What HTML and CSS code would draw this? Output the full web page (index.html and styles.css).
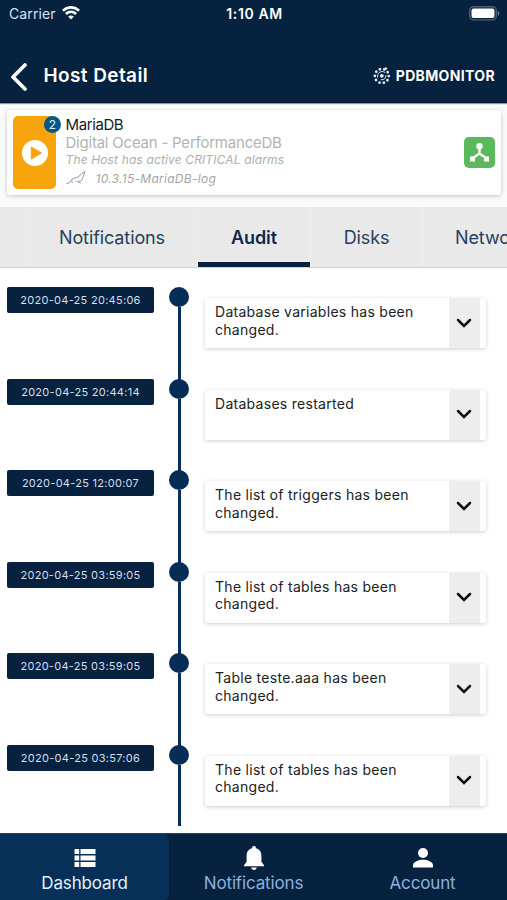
FILE: index.html
```
<!DOCTYPE html>
<html lang="en">
<head>
<meta charset="utf-8">
<title>Host Detail</title>
<link rel="stylesheet" href="styles.css">
</head>
<body>
<div class="screen">
  <header class="header">
    <div class="status">
      <div class="carrier"><span>Carrier</span>
        <svg width="18" height="14" viewBox="0 0 18 14" fill="none" stroke="#fff" stroke-width="2.7"><path d="M.9 4.700C5.600.2 12.400.2 17.100 4.700M3.900 8c3-2.800 7.200-2.800 10.200 0"/><path d="M9 13.500 6.100 10.600c1.800-1.500 4-1.500 5.800 0z" fill="#fff" stroke="none"/></svg>
      </div>
      <div class="clock">1:10 AM</div>
      <svg class="battery" width="31" height="15" viewBox="0 0 31 15"><rect x=".7" y=".7" width="26.600" height="13.200" rx="3.800" fill="none" stroke="#4b5e77" stroke-width="1.400"/><rect x="2.500" y="2.500" width="23" height="9.600" rx="2" fill="#fff"/><path d="M28.800 5c2 .7 2 4 0 4.700z" fill="#71839a"/></svg>
    </div>
    <div class="titlebar">
      <svg class="back" width="18" height="28" viewBox="0 0 18 28" fill="none" stroke="#fff" stroke-width="3.700" stroke-linecap="round" stroke-linejoin="round"><path d="M15 2 3 14l12 12"/></svg>
      <h1>Host Detail</h1>
      <div class="brand">
        <svg width="18" height="18" viewBox="0 0 18 18" fill="none" stroke="#e6f1ff"><circle cx="8.800" cy="9" r="7" stroke-width="2.700" stroke-linecap="round" stroke-dasharray=".1 4.300"/><path d="M4.600 10.500C3.700 6 8.500 2.900 12 5.500M12.800 8c.6 3-2 5.400-5 4.600" stroke-width="1"/><circle cx="8.800" cy="8.800" r="1.900" fill="#e6f1ff" stroke="none"/><circle cx="12.800" cy="1.600" r="1.300" fill="#e6f1ff" stroke="none"/></svg>
        <span>PDBMONITOR</span>
      </div>
    </div>
  </header>

  <section class="host">
    <div class="state"><svg width="26" height="26" viewBox="0 0 26 26"><circle cx="13" cy="13" r="13" fill="#fff"/><path d="M9.300 7v12l10.200-6z" fill="#f7a30c" stroke="#f7a30c" stroke-linejoin="round"/></svg><span class="count">2</span></div>
    <div class="info">
      <div class="name">MariaDB</div>
      <div class="place">Digital Ocean - PerformanceDB</div>
      <div class="alarm">The Host has active CRITICAL alarms</div>
      <div class="version">
        <svg width="20" height="14" viewBox="0 0 20 14" fill="none" stroke="#7d84ad" stroke-width=".9" stroke-linejoin="round"><path d="M.5 12.500c3 .1 3.500-1.500 4.700-3.600 1.800-2.500 6-1.600 8-3.700 1.600-1.800 2.700-3.600 6-4.500-1.600 1.100-.7 2.800-2 4.700-.7 1.200-.5 3-2 4.300-1.300 1-2.800.1-3.600 1.200.8.700 2.300.3 3.100 1.500"/><path d="m7.200 9.300-2 1.700 2 .4m3.500-2-1.200 2" stroke="#a5a8bd"/></svg>
        <span>10.3.15-MariaDB-log</span>
      </div>
    </div>
    <svg class="cluster" width="31" height="31" viewBox="0 0 31 31"><rect width="31" height="31" rx="5" fill="#5cb85c"/><circle cx="15.500" cy="9.200" r="3.200" fill="#fff"/><path d="M15.500 10v6.500l-7.200 5M15.500 16.500l7.200 5" fill="none" stroke="#fff" stroke-width="2.300"/><path d="M6 19.500h5v5H6zM20 19.500h5v5h-5z" fill="#fff"/></svg>
  </section>

  <nav class="tabs">
    <div class="tab stub"></div>
    <div class="tab wide"><span>Notifications</span></div>
    <div class="tab active"><span>Audit</span></div>
    <div class="tab"><span>Disks</span></div>
    <div class="tab last"><span>Network</span></div>
  </nav>

  <main class="timeline">
    <div class="entry"><time>2020-04-25 20:45:06</time><div class="rail"><i></i></div><article><p>Database variables has been changed.</p><div class="more"><svg width="16" height="11" viewBox="0 0 16 11"><path d="m2 2 6 6 6-6"/></svg></div></article></div>
    <div class="entry"><time>2020-04-25 20:44:14</time><div class="rail"><i></i></div><article><p>Databases restarted</p><div class="more"><svg width="16" height="11" viewBox="0 0 16 11"><path d="m2 2 6 6 6-6"/></svg></div></article></div>
    <div class="entry"><time>2020-04-25 12:00:07</time><div class="rail"><i></i></div><article><p>The list of triggers has been changed.</p><div class="more"><svg width="16" height="11" viewBox="0 0 16 11"><path d="m2 2 6 6 6-6"/></svg></div></article></div>
    <div class="entry"><time>2020-04-25 03:59:05</time><div class="rail"><i></i></div><article><p>The list of tables has been changed.</p><div class="more"><svg width="16" height="11" viewBox="0 0 16 11"><path d="m2 2 6 6 6-6"/></svg></div></article></div>
    <div class="entry"><time>2020-04-25 03:59:05</time><div class="rail"><i></i></div><article><p>Table teste.aaa has been changed.</p><div class="more"><svg width="16" height="11" viewBox="0 0 16 11"><path d="m2 2 6 6 6-6"/></svg></div></article></div>
    <div class="entry"><time>2020-04-25 03:57:06</time><div class="rail"><i></i></div><article><p>The list of tables has been changed.</p><div class="more"><svg width="16" height="11" viewBox="0 0 16 11"><path d="m2 2 6 6 6-6"/></svg></div></article></div>
  </main>

  <footer class="dock">
    <div class="dock-item current"><svg width="22" height="22" viewBox="0 0 22 22" fill="#fff"><path d="M.5 2h4.700v5H.5zM6.500 2h15v5h-15zM.5 8.500h4.700v5H.5zM6.500 8.500h15v5h-15zM.5 15h4.700v5H.5zM6.500 15h15v5h-15z"/></svg><span>Dashboard</span></div>
    <div class="dock-item"><svg class="bell" width="22" height="26" viewBox="0 0 22 26" fill="#fff"><path d="M11 1c1.300 0 2 .9 2 2.200 3.700 1 5.400 4 5.400 7.300v6.200l2.600 3.600v1H1v-1l2.600-3.600v-6.200c0-3.300 1.700-6.300 5.400-7.300C9 1.900 9.700 1 11 1zM8.300 22.500h5.400c0 3.300-5.400 3.300-5.400 0z"/></svg><span>Notifications</span></div>
    <div class="dock-item"><svg width="22" height="22" viewBox="0 0 22 22" fill="#fff"><circle cx="11" cy="6" r="5"/><path d="M1 20.500v-2.300c0-3.500 6-5.400 10-5.400s10 1.900 10 5.400v2.300z"/></svg><span>Account</span></div>
  </footer>
</div>
</body>
</html>
```

FILE: styles.css
```
* { box-sizing: border-box; }
body { margin: 0; font-family: Inter, "Liberation Sans", sans-serif; background: #f9fafb; }
svg { display: block; flex: none; }
.screen { width: 507px; height: 900px; display: flex; flex-direction: column; overflow: hidden; }
.header { height: 103px; flex: none; background: #06223e; color: #fff; border-bottom: 1px solid #001b35; box-shadow: 0 1px 1px #8994a7; }
.status { height: 27px; padding: 0 7px 0 9px; display: grid; grid-template-columns: 1fr auto 1fr; align-items: center; }
.carrier { display: flex; align-items: center; gap: 6px; font-size: 14px; letter-spacing: .1px; color: #d8e3ef; }
.carrier svg { margin-top: -1px; }
.clock { font-size: 14px; font-weight: 600; letter-spacing: .6px; }
.battery { justify-self: end; }
.titlebar { height: 75px; padding: 22px 12px 0 10px; display: flex; align-items: flex-start; }
.back { margin-top: 14px; }
h1 { margin: 12px 0 0 15.500px; font-size: 19px; line-height: 30px; font-weight: 600; letter-spacing: .4px; white-space: nowrap; }
.brand { margin: 17px 0 0 auto; display: flex; align-items: center; gap: 5px; font: 700 14px/20px Inter, sans-serif; letter-spacing: .35px; white-space: nowrap; }
.host { height: 85px; flex: none; margin: 7px 6px 12px 7px; padding: 6px; display: flex; background: #fff; border-radius: 3px; box-shadow: 0 1px 4px rgba(0,0,0,.22); }
.state { position: relative; width: 43px; height: 73px; background: #f7a30c; border-radius: 5px; display: flex; align-items: center; justify-content: center; }
.count { position: absolute; top: 0; right: -5px; width: 17px; height: 17px; border-radius: 50%; background: #075789; color: #e1f2ff; text-align: center; font-size: 12px; line-height: 17px; }
.info { margin-left: 9.500px; margin-top: -1px; white-space: nowrap; }
.name { font-size: 15px; line-height: 19px; letter-spacing: -.4px; color: #18191b; }
.place { font-size: 15px; line-height: 18px; letter-spacing: -.22px; color: #b3b3b3; }
.alarm { font-size: 12px; line-height: 16px; letter-spacing: .14px; color: #aeaeae; font-style: italic; }
.version { display: flex; align-items: center; gap: 10px; height: 20px; font-size: 12px; letter-spacing: .28px; font-style: italic; color: #a5a5a5; }
.cluster { margin: 21px 0 0 auto; }
.tabs { height: 61px; flex: none; display: flex; background: #e9e9e9; border-bottom: 1px solid #d2d3d4; }
.tab { width: 112px; flex: none; border-left: 1px solid #eeeeef; font-size: 18px; letter-spacing: -.1px; color: #24405c; display: flex; justify-content: center; padding-top: 19px; line-height: 23px; }
.tab.stub { width: 26px; border: 0; }
.tab.wide { width: 171px; }
.tab.active { width: 113px; font-weight: 600; color: #0d294b; box-shadow: inset 0 -5px #06223e; }
.tab.last { width: 140px; justify-content: flex-start; padding-left: 32px; }
.timeline { height: 565px; flex: none; padding: 19px 21px 0 7px; background: #fff; }
.entry { display: flex; height: 91.600px; }
time { width: 147px; height: 26px; border-radius: 2px; background: #06223e; color: #d5dfed; text-align: center; font-size: 11px; line-height: 26px; letter-spacing: .28px; white-space: nowrap; }
.rail { width: 20px; margin-left: 15px; display: flex; flex-direction: column; align-items: center; }
.rail::after { content: ""; width: 3px; flex: 1; background: #06305a; }
.rail i { width: 20px; height: 20px; border-radius: 50%; background: #062d56; }
.entry + .entry .rail { background: linear-gradient(#06305a, #06305a) 8.500px 0 / 3px 10px no-repeat; }
.entry:last-child { height: 81px; }
article { width: 281px; height: 50px; margin: 11px 0 0 16px; display: flex; background: #fff; border-radius: 3px; box-shadow: 0 1px 4px rgba(0,0,0,.2); }
article p { margin: 0; width: 244px; padding: 5px 0 0 10px; font-size: 14px; line-height: 17.500px; letter-spacing: .28px; color: #202123; }
.more { width: 31px; background: #ededed; display: flex; align-items: center; justify-content: center; }
.more svg { margin-right: 1px; fill: none; stroke: #111; stroke-width: 2.500; stroke-linecap: round; }
.dock { height: 67px; flex: none; display: flex; background: #06223e; border-top: 1px solid #294259; }
.dock-item { flex: 1; display: flex; flex-direction: column; align-items: center; color: #8eb0df; font-size: 17px; line-height: 20px; letter-spacing: -.15px; padding-top: 13px; }
.dock-item svg { margin-bottom: 4px; }
.dock-item .bell { margin: -2px 0 2px; }
.dock-item.current { color: #e6f1ff; background: #063058; border-radius: 0 5px 5px 0; }
```
